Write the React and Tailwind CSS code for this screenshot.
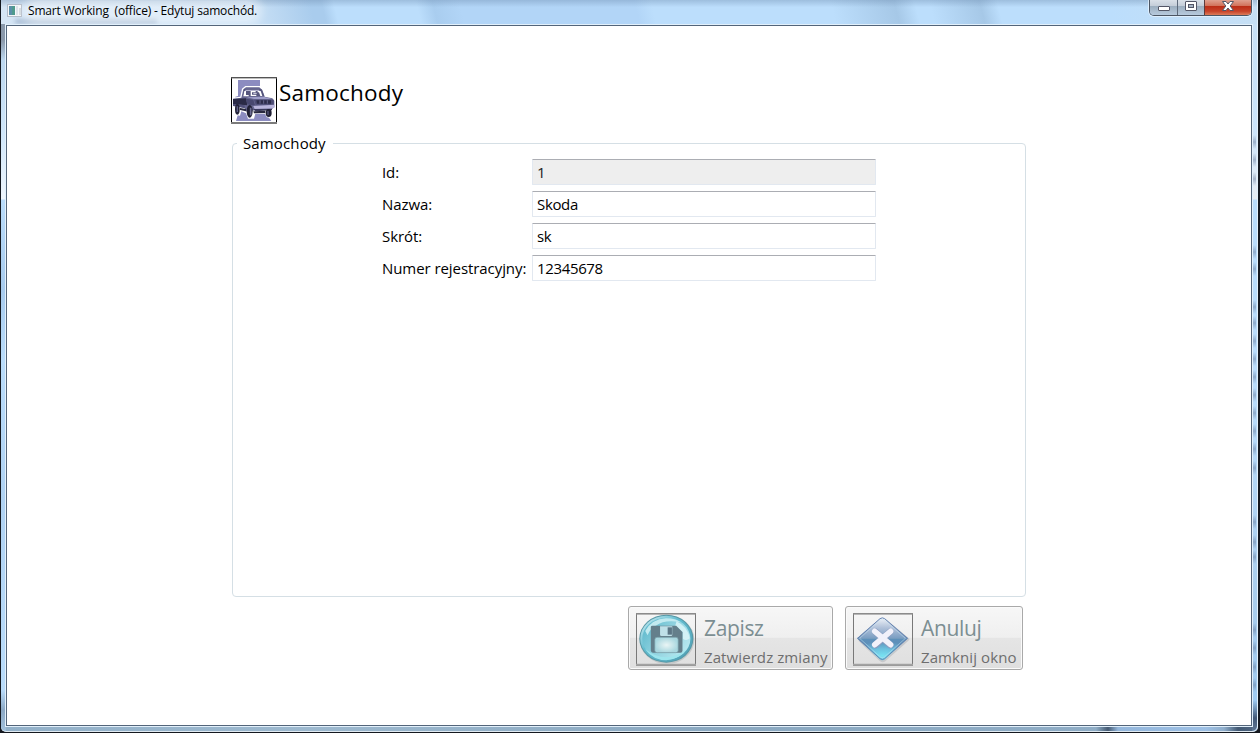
import React from 'react';

const glassSpots = [142, 160, 179, 252, 269, 307, 323, 341, 359, 377, 395, 413, 431, 449, 468, 522, 542, 557, 630, 648, 667, 685];

function AppIcon() {
  return (
    <svg width="16" height="14" viewBox="0 0 16 14" className="block">
      <rect x="0.5" y="0.5" width="14" height="12" fill="#f4f6f8" stroke="#b4bcc8" />
      <rect x="2" y="2" width="6" height="9" fill="#4f9a8c" />
      <rect x="2" y="2" width="3" height="9" fill="#5b8fa8" />
      <rect x="9" y="2" width="2" height="9" fill="#dde3ea" />
      <rect x="12" y="4" width="2" height="7" fill="#d3dbe0" />
    </svg>
  );
}

function TruckIcon() {
  return (
    <svg width="46" height="47" viewBox="3 3 138 141" className="block shrink-0">
      <rect x="3" y="3" width="138" height="141" fill="#000" />
      <rect x="3" y="3" width="138" height="5" fill="#555" />
      <rect x="3" y="138" width="138" height="6" fill="#7c7c7c" />
      <rect x="6" y="7" width="132" height="131" fill="#fff" />
      <path d="M24 12H90V32L100 60L106 110L124 135H18L26 108L16 96V62L24 60Z" fill="#8c8cc0" />
      <path d="M8 65L31 62L36 38L46 30H90L101 38L108 60L130 64L136 72V96L132 101V120L124 126L110 124L105 113L76 113L72 128H54L48 112L34 106L30 119L17 117L12 100L8 92Z" fill="#fff" />
      <path d="M9 68L34 65L40 40L48 34H88L97 42L104 62L127 67L133 74V94L126 99L76 103L50 107L44 97L9 88Z" fill="#666690" />
      <path d="M9 69L48 67L52 88L9 84Z" fill="#2a2a46" />
      <path d="M9 84L44 88V96L9 90Z" fill="#50507a" />
      <path d="M42 39H94L103 60H38Z" fill="#55557c" />
      <path d="M46 43H88" stroke="#c9c9e0" strokeWidth="3" />
      <path d="M43 45H48V57H56V61H40ZM62 45H77V49H66V56H79V60H62ZM83 45H92L97 60H91L87 49H83Z" fill="#fff" />
      <path d="M70 52H80" stroke="#d8d8ea" strokeWidth="3" />
      <path d="M50 64L101 62L126 69H72Z" fill="#9d9dc8" />
      <path d="M48 68L70 71L75 88H60L52 84Z" fill="#484870" />
      <path d="M72 71H131V86H77Z" fill="#4c4c74" />
      <path d="M79 73H123V83H81Z" fill="#2d2d4b" />
      <path d="M90 73V83M101 73V83M112 73V83" stroke="#66668c" strokeWidth="3" />
      <path d="M70 90L134 86V94L126 98L74 99Z" fill="#b9b5dc" />
      <path d="M70 99L126 98V103L76 106Z" fill="#39395b" />
      <ellipse cx="22" cy="100" rx="7" ry="16" fill="#242438" />
      <path d="M22 91V108" stroke="#62628a" strokeWidth="4" />
      <ellipse cx="59" cy="106" rx="9" ry="19" fill="#202034" />
      <path d="M62 95V118" stroke="#6d6d94" strokeWidth="5" />
      <ellipse cx="116" cy="111" rx="9" ry="12" fill="#202034" />
      <path d="M114 105V117" stroke="#55557c" strokeWidth="4" />
      <path d="M30 96L48 99V106L30 102ZM70 106L106 104V111L72 112Z" fill="#29293f" />
    </svg>
  );
}

function IconFrame() {
  return (
    <>
      <rect x="1.5" y="2" width="179" height="155" fill="none" stroke="#777" strokeWidth="3" />
      <path d="M0 155H182" stroke="#a2a2a2" strokeWidth="6" />
      <path d="M0 3H182" stroke="#8c8c8c" strokeWidth="3" />
    </>
  );
}

function SaveIcon() {
  return (
    <svg width="60" height="53" viewBox="0 0 182 159" preserveAspectRatio="none" className="block shrink-0">
      <defs>
        <linearGradient id="ring" x1="0" y1="0" x2="1" y2="1">
          <stop offset="0" stopColor="#d9f2f7" />
          <stop offset="0.4" stopColor="#63bdd0" />
          <stop offset="1" stopColor="#4f9cb0" />
        </linearGradient>
        <linearGradient id="disc" x1="0" y1="0" x2="1" y2="0.6">
          <stop offset="0" stopColor="#55b4c9" />
          <stop offset="0.55" stopColor="#8fd2df" />
          <stop offset="1" stopColor="#b5e7ef" />
        </linearGradient>
        <radialGradient id="label">
          <stop offset="0" stopColor="#eaf5f5" />
          <stop offset="1" stopColor="#a9d7df" />
        </radialGradient>
      </defs>
      <IconFrame />
      <ellipse cx="94" cy="80" rx="83" ry="73" fill="#c4c8c9" />
      <ellipse cx="92" cy="77" rx="82" ry="72" fill="#5798a6" />
      <ellipse cx="92" cy="77" rx="79" ry="69" fill="url(#ring)" />
      <ellipse cx="92" cy="77" rx="73" ry="63" fill="url(#disc)" />
      <path d="M28 54Q48 18 91 16Q119 16 135 28Q89 18 60 38Q42 48 35 67Z" fill="#c2eaf0" />
      <path d="M123 25Q158 42 163 76Q153 85 142 77V58L119 38Z" fill="#dff6f9" opacity="0.8" />
      <path d="M28 109Q91 157 154 109Q130 140 92 142Q52 142 28 109Z" fill="#9de5ed" />
      <path d="M45 42Q45 38 50 38H122L141 57V113Q141 119 135 119H51Q45 119 45 112Z" fill="#647f8b" />
      <path d="M73 40H110V66Q110 69 106 69H77Q73 69 73 65Z" fill="#bfe0e8" />
      <rect x="96" y="43" width="13" height="22" fill="#5c7685" />
      <rect x="57" y="73" width="71" height="46" rx="7" fill="url(#label)" stroke="#769ca7" strokeWidth="2" />
    </svg>
  );
}

function CancelIcon() {
  return (
    <svg width="60" height="53" viewBox="0 0 182 159" preserveAspectRatio="none" className="block shrink-0">
      <defs>
        <linearGradient id="dtop" x1="0" y1="0" x2="0" y2="1">
          <stop offset="0" stopColor="#f2f5fa" />
          <stop offset="0.5" stopColor="#b0c1d9" />
          <stop offset="1" stopColor="#7a9dc2" />
        </linearGradient>
        <radialGradient id="dbottom" cx="0.5" cy="0.8" r="0.65">
          <stop offset="0" stopColor="#77e2f2" />
          <stop offset="0.5" stopColor="#6cc0de" />
          <stop offset="1" stopColor="#5e90ba" />
        </radialGradient>
      </defs>
      <IconFrame />
      <path d="M16 83L82 145Q90 151 98 145L168 83L172 78L102 20Z" fill="#c8c9cc" />
      <path d="M12 76L81 16Q89 10 97 16L167 76Z" fill="url(#dtop)" />
      <path d="M12 76H167L97 139Q89 145 81 139Z" fill="url(#dbottom)" />
      <path d="M14 76L82 17Q89 12 96 17L165 76L96 137Q89 142 82 137Z" fill="none" stroke="#6582ae" strokeWidth="3" />
      <path d="M20 76L83 21Q89 16 95 21L159 76L95 132Q89 137 83 132Z" fill="none" stroke="#cce5f1" strokeWidth="2" opacity="0.7" />
      <path d="M68 56L113 96M113 56L68 96" stroke="#8b9cc0" strokeWidth="20" strokeLinecap="round" />
      <path d="M66 55L114 95M114 55L66 95" stroke="#f1f1fa" strokeWidth="17" strokeLinecap="round" />
    </svg>
  );
}

function CaptionButtons() {
  return (
    <div className="mr-[5px] flex h-[16px] w-[103px] shrink-0 overflow-hidden rounded-b-[5px] border-x border-b border-[#4b5563] shadow-[0_0_0_1px_rgba(235,245,255,0.7)]">
      <div className="flex w-[28px] justify-center border-r border-[#5d6a7b] bg-[linear-gradient(#d9e0e8_0%,#c5ced9_38%,#9caebf_42%,#b7cadd_100%)]">
        <svg width="14" height="14" className="ml-[1px] block">
          <rect x="1.5" y="6.5" width="11" height="4" rx="0.5" fill="#fff" stroke="#535666" />
        </svg>
      </div>
      <div className="flex w-[27px] justify-center border-r border-[#5d3b3c] bg-[linear-gradient(#d9e0e8_0%,#c5ced9_38%,#9caebf_42%,#b7cadd_100%)]">
        <svg width="14" height="14" className="block">
          <rect x="1.5" y="1.5" width="11" height="9" rx="0.5" fill="#fff" stroke="#535666" />
          <rect x="4.5" y="4.5" width="5" height="3" fill="#a7b5c5" stroke="#535666" />
        </svg>
      </div>
      <div className="flex flex-1 justify-center bg-[linear-gradient(#dfa08f_0%,#d2735c_38%,#bb2d16_42%,#c8432a_75%,#db7c5a_100%)]">
        <svg width="14" height="14" className="block">
          <path d="M1.5 1.5H5L7 4L9 1.5H12.5L9.2 6L12.5 10.5H9L7 8L5 10.5H1.5L4.8 6Z" fill="#fff" stroke="#535666" />
        </svg>
      </div>
    </div>
  );
}

function Field({ label, value, readOnly }) {
  return (
    <label className="flex h-[26px] items-center">
      <span className="w-[150px] shrink-0 whitespace-nowrap text-[15px] leading-[26px] tracking-[-0.07px]">{label}</span>
      <input
        defaultValue={value}
        readOnly={readOnly}
        className="h-[26px] w-[344px] rounded-[1px] border border-[#e2e8f0] border-t-[#abadb3] bg-white px-[4px] text-[15px] tracking-[-0.35px] outline-none read-only:bg-[#eeeeee] read-only:text-[#222]"
      />
    </label>
  );
}

function ActionButton({ icon, title, subtitle, className }) {
  return (
    <button className={`flex h-[64px] items-start rounded-[3px] border border-[#a9a9a9] bg-[linear-gradient(#f7f7f7_0%,#efefef_49%,#e5e5e5_50%,#dfdfdf_100%)] pl-[7px] pt-[6px] text-left shadow-[inset_0_0_0_1px_#fafafa] ${className}`}>
      {icon}
      <span className="ml-[8px] flex flex-col whitespace-nowrap">
        <span className="h-[32px] text-[21px] leading-[30px] tracking-[-0.35px] text-[#7c8e92]">{title}</span>
        <span className="text-[15px] leading-[24px] tracking-[0.09px] text-[#6e6e6e]">{subtitle}</span>
      </span>
    </button>
  );
}

export default function App() {
  return (
    <div className="flex h-[733px] w-[1260px] flex-col overflow-hidden bg-[#14181f] pb-px pl-px pr-[2px] font-['Open_Sans','Noto_Sans',sans-serif] text-black">
      <div className="relative flex min-h-0 flex-1 flex-col rounded-b-[5px] border-b border-r border-b-[#e0eaf2] border-r-[#e3f1fb] bg-[#b9dcfb]">
        <div className="absolute inset-y-0 left-0 w-[5px] rounded-bl-[5px] bg-[linear-gradient(#8998aa_0px,#8998aa_40px,#bcd7ef_60px,#d2e8fb_140px,#eff6fd_199px,#b9dcfb_200px,#a7cbee_290px,#b9dcfb_360px,#afd2f3_500px,#b9dcfb_690px,#8ba8c5_710px,#a5c4df_733px)]" />
        <div className="absolute inset-y-0 right-0 w-[5px] rounded-br-[5px] bg-[linear-gradient(#c6dff5_0px,#cbe4fb_130px,#e8eef4_199px,#b9dcfb_200px,#b9dcfb_400px,#a9cdec_600px,#9fcbf2_700px,#435a79_718px,#647b96_733px)]">
          {glassSpots.map((y) => (
            <div key={y} className="absolute left-0 h-[14px] w-[4px] bg-[linear-gradient(rgba(92,112,145,0),rgba(92,112,145,0.45),rgba(92,112,145,0))]" style={{ top: y - 7 }} />
          ))}
        </div>
        <header className="relative flex h-[24px] shrink-0 items-start justify-between bg-[linear-gradient(rgba(100,130,165,0.35)_0%,rgba(100,130,165,0)_30%),linear-gradient(76deg,#d6e6f5_0px,#c7dff5_250px,#a9cced_305px,#a9cced_316px,#bcdefc_328px,#bcdefc_408px,#a9cdef_424px,#b2d5f7_450px,#b2d5f7_620px,#bcdefc_636px,#bcdefc_810px,#a6c8e7_872px,#bcdefc_892px,#bcdefc_906px,#a6c8e7_955px,#bcdefc_972px,#bcdefc_1080px,#c6dff4_1225px)]">
          <div className="absolute bottom-0 left-[14px] h-[5px] w-[142px] bg-[#7d95b4] opacity-50 blur-[2px]" />
          <div className="relative flex h-[22px] items-center pl-[6px]">
            <AppIcon />
            <h1 className="ml-[5px] whitespace-pre rounded-full bg-white/40 text-[12px] leading-[20px] tracking-[-0.18px] shadow-[0_0_8px_5px_rgba(255,255,255,0.4)]">{'Smart Working  (office) - Edytuj samochód.'}</h1>
          </div>
          <CaptionButtons />
        </header>
        <div className="relative ml-[4px] mr-[4px] flex h-[703px] shrink-0 border border-[#e2f0fb]">
          <main className="flex flex-1 flex-col border border-[#53657a] bg-white pl-[224px] pt-[51px]">
            <div className="flex h-[47px]">
              <TruckIcon />
              <h2 className="ml-[2px] text-[22.5px] leading-[31px] tracking-[0.2px]">Samochody</h2>
            </div>
            <fieldset className="ml-[1px] mt-[8px] h-[465px] w-[794px] rounded-[4px] border border-[#d5dfe5] pl-[149px]">
              <legend className="-ml-[145px] h-[23px] w-[96px] pl-[6px] text-[15px] leading-[23px] tracking-[0.13px]">Samochody</legend>
              <div className="mt-[4px] flex flex-col gap-[6px]">
                <Field label="Id:" value="1" readOnly />
                <Field label="Nazwa:" value="Skoda" />
                <Field label="Skrót:" value="sk" />
                <Field label="Numer rejestracyjny:" value="12345678" />
              </div>
            </fieldset>
            <div className="ml-[397px] mt-[9px] flex gap-[12px]">
              <ActionButton icon={<SaveIcon />} title="Zapisz" subtitle="Zatwierdz zmiany" className="w-[205px]" />
              <ActionButton icon={<CancelIcon />} title="Anuluj" subtitle="Zamknij okno" className="w-[178px]" />
            </div>
          </main>
        </div>
        <div className="mx-[5px] h-[4px] shrink-0 bg-[linear-gradient(90deg,#93b1c9_0px,#9db9cf_300px,#8ba9c1_700px,#8fadc6_1090px,#465b73_1102px,#94b7dc_1112px,#9dc0e5_1200px,#8faecc_1218px,#435a74_1232px,#4d637e_1245px)]" />
      </div>
    </div>
  );
}
